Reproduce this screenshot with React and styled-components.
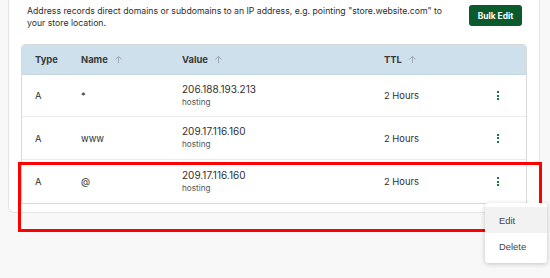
import React from 'react';
import styled, {createGlobalStyle} from 'styled-components';

const GlobalStyle = createGlobalStyle`
  *, *::before, *::after { box-sizing: border-box; }
  body {
    margin: 0;
    background: #f8f8f8;
    font-family: Inter, "Noto Sans", sans-serif;
    color: #2b2b2b;
  }
`

const Page = styled.div`
  position: relative;
  width: 550px;
  height: 278px;
  overflow: hidden;
`

const Card = styled.div`
  margin-left: 8px;
  width: 532px;
  background: white;
  border: 1px solid #e4e4e4;
  border-top: none;
  border-radius: 0 0 6px 6px;
  padding: 5px 12px 8px 12px;
`

const TopRow = styled.div`
  display: flex;
  justify-content: space-between;
  align-items: flex-start;
  padding: 0 5px 0 6px;
`

const Description = styled.p`
  margin: 0;
  width: 425px;
  font-size: 8.7px;
  line-height: 12px;
  color: #2e2e2e;
`

const BulkButton = styled.button`
  width: 53px;
  height: 21px;
  border: none;
  border-radius: 3px;
  background: #0b5a2b;
  color: white;
  font-family: Inter, sans-serif;
  font-weight: 700;
  font-size: 8.4px;
  padding: 0;
`

const Table = styled.div`
  margin-top: 15px;
  border: 1px solid #d9d9d9;
  border-radius: 4px 4px 0 0;
  overflow: hidden;
`

const Row = styled.div`
  display: grid;
  grid-template-columns: 46px 101px 202px 113px 1fr;
  align-items: center;
  padding-left: 13px;
  height: ${p => p.$h}px;
  background: ${p => p.$head ? '#cee0ec' : 'white'};
  border-bottom: ${p => p.$last ? 'none' : `1px solid ${p.$head ? '#c5d6e2' : '#ebebeb'}`};
  font-size: 9.4px;
  color: #2f2f2f;
`

const HeadCell = styled.div`
  display: flex;
  align-items: center;
  gap: 6px;
  font-weight: 700;
  color: #3a3a3a;
`

const Arrow = styled.svg`
  width: 9px;
  height: 9px;
  stroke: #9aa4ab;
  stroke-width: 1;
  fill: none;
`

const ValueCell = styled.div`
  display: flex;
  flex-direction: column;
  line-height: 13px;
  font-size: 10px;
`

const Sub = styled.span`
  font-size: 8.2px;
  color: #555;
`

const Dots = styled.div`
  display: flex;
  flex-direction: column;
  gap: 1.5px;
  & span {
    width: 2px;
    height: 2px;
    background: #167a40;
  }
`

const Highlight = styled.div`
  position: absolute;
  left: 18px;
  top: 162px;
  width: 524px;
  height: 70px;
  border: 3px solid #ff0000;
`

const Menu = styled.div`
  position: absolute;
  left: 485px;
  top: 203px;
  width: 62px;
  padding: 4px 0;
  background: white;
  border-radius: 3px;
  box-shadow: 0 1px 5px rgba(0, 0, 0, 0.22);
  &::before {
    content: "";
    position: absolute;
    top: -5px;
    right: 9px;
    border-left: 5px solid transparent;
    border-right: 5px solid transparent;
    border-bottom: 5px solid white;
  }
`

const MenuItem = styled.div`
  height: 26px;
  display: flex;
  align-items: center;
  padding-left: 14px;
  font-family: "Liberation Sans", Arial, sans-serif;
  font-size: 9.4px;
  color: #444;
  background: ${p => p.$active ? '#f2f2f2' : 'white'};
`

const UpArrow = () => (
    <Arrow viewBox="0 0 10 10">
        <path d="M5 9V1.5M1.5 5L5 1.5 8.5 5"/>
    </Arrow>
)

const records = [
    {type: 'A', name: '*', value: '206.188.193.213', ttl: '2 Hours'},
    {type: 'A', name: 'www', value: '209.17.116.160', ttl: '2 Hours'},
    {type: 'A', name: '@', value: '209.17.116.160', ttl: '2 Hours'},
]

const App = () => {
    return (
        <Page>
            <GlobalStyle/>
            <Card>
                <TopRow>
                    <Description>
                        Address records direct domains or subdomains to an IP address, e.g. pointing "store.website.com" to your store location.
                    </Description>
                    <BulkButton>Bulk Edit</BulkButton>
                </TopRow>
                <Table>
                    <Row $head $h={30}>
                        <HeadCell>Type</HeadCell>
                        <HeadCell>Name <UpArrow/></HeadCell>
                        <HeadCell>Value <UpArrow/></HeadCell>
                        <HeadCell>TTL <UpArrow/></HeadCell>
                        <div/>
                    </Row>
                    {records.map((r, i) => (
                        <Row key={i} $h={i === 0 ? 42 : 43} $last={i === records.length - 1}>
                            <div>{r.type}</div>
                            <div>{r.name}</div>
                            <ValueCell>
                                <span>{r.value}</span>
                                <Sub>hosting</Sub>
                            </ValueCell>
                            <div>{r.ttl}</div>
                            <Dots><span/><span/><span/></Dots>
                        </Row>
                    ))}
                </Table>
            </Card>
            <Highlight/>
            <Menu>
                <MenuItem $active>Edit</MenuItem>
                <MenuItem>Delete</MenuItem>
            </Menu>
        </Page>
    );
};

export default App;
